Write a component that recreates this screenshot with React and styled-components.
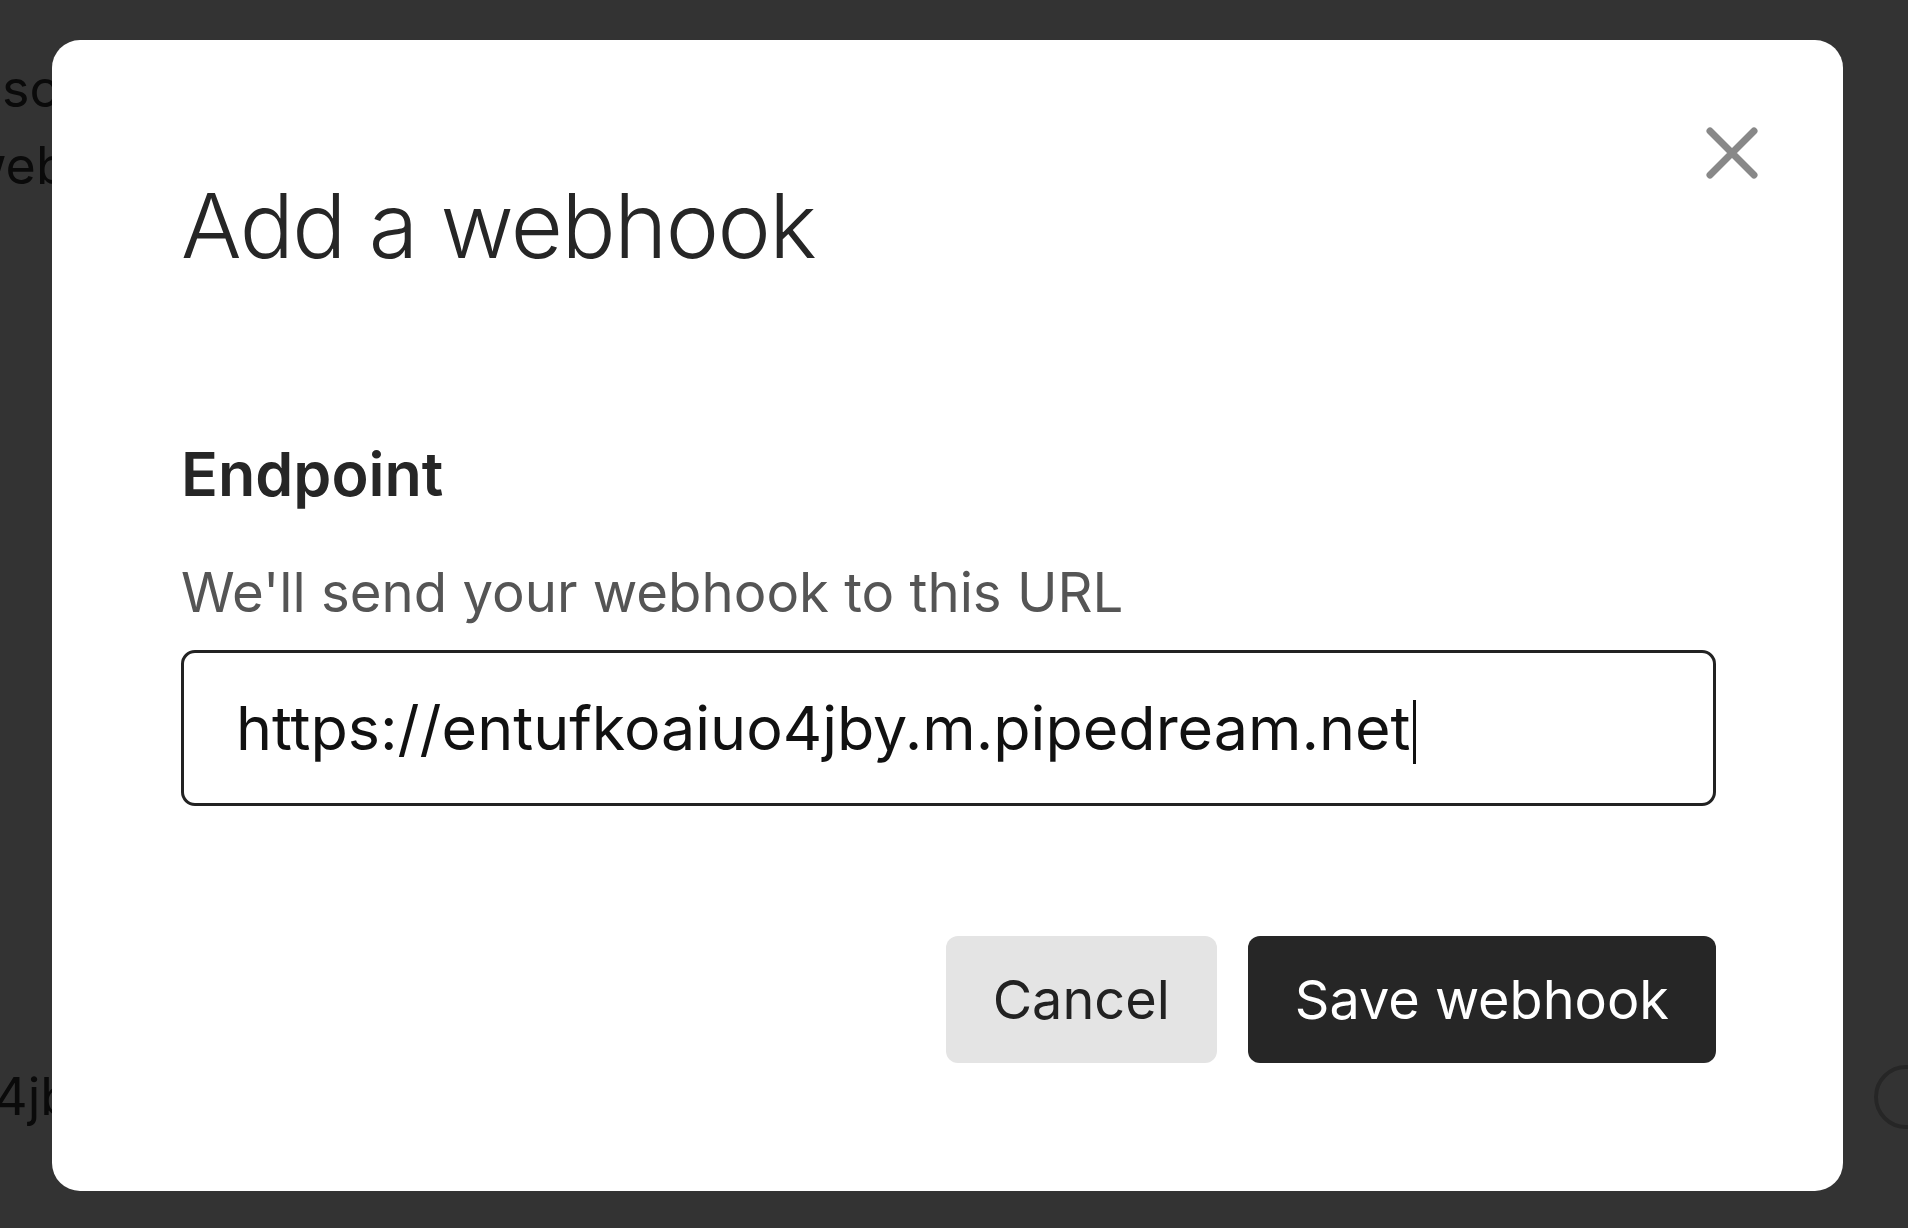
import React from 'react'
import styled, { createGlobalStyle } from 'styled-components'

const GlobalStyle = createGlobalStyle`
    html, body {
        margin: 0;
        padding: 0;
        height: 100%;
        overflow: hidden;
        background: #ffffff;
        font-family: Inter, "Noto Sans", sans-serif;
    }
`

const Page = styled.div`
    width: 1908px;
    height: 1228px;
    padding-top: 50px;
    box-sizing: border-box;
    display: flex;
    flex-direction: column;
    overflow: hidden;
`

const PageLine = styled.div`
    font-size: 52px;
    line-height: 77px;
    color: #333;
    white-space: nowrap;
    margin-left: ${p => p.$indent || 0}px;
    margin-top: ${p => p.$gap || 0}px;
    display: flex;
    align-items: center;
    justify-content: space-between;
`

const Ring = styled.span`
    width: 56px;
    height: 56px;
    border: 4px solid #bdbdbd;
    border-radius: 50%;
    margin-right: -30px;
`

const Overlay = styled.div`
    position: fixed;
    inset: 0;
    background: rgba(0, 0, 0, 0.8);
    padding: 40px 0 0 52px;
`

const Modal = styled.div`
    position: relative;
    width: 1791px;
    box-sizing: border-box;
    background: #fff;
    border-radius: 28px;
    padding: 132px 127px 128px 129px;
    display: flex;
    flex-direction: column;
`

const CloseButton = styled.button`
    position: absolute;
    top: 87px;
    right: 85px;
    width: 52px;
    height: 52px;
    padding: 0;
    border: 0;
    background: none;
    cursor: pointer;
    display: flex;
`

const Title = styled.h1`
    margin: 0;
    font-size: 90px;
    line-height: 108px;
    font-weight: 300;
    letter-spacing: -1.5px;
    color: #262626;
`

const Label = styled.h2`
    margin: 158px 0 0;
    font-size: 61px;
    line-height: 72px;
    font-weight: 600;
    color: #262626;
`

const Hint = styled.p`
    margin: 49px 0 0;
    font-size: 54.5px;
    line-height: 66px;
    color: #555;
`

const Field = styled.div`
    margin-top: 25px;
    height: 156px;
    box-sizing: border-box;
    border: 3px solid #222;
    border-radius: 14px;
    padding: 0 52px;
    display: flex;
    align-items: center;
    font-size: 61px;
    line-height: 74px;
    color: #111;
    white-space: nowrap;
`

const Caret = styled.span`
    width: 3px;
    height: 64px;
    margin: 8px 0 0 2px;
    background: #111;
`

const Actions = styled.div`
    margin-top: 130px;
    display: flex;
    justify-content: flex-end;
    gap: 31px;
`

const Button = styled.button`
    height: 127px;
    padding: 0 47px;
    border: 0;
    border-radius: 12px;
    font-family: Inter, "Noto Sans", sans-serif;
    font-size: 54px;
    font-weight: 400;
    cursor: pointer;
    background: ${p => (p.$primary ? '#262626' : '#e4e4e4')};
    color: ${p => (p.$primary ? '#ffffff' : '#222222')};
`

const CloseIcon = () => (
    <svg width="52" height="52" viewBox="0 0 52 52" fill="none">
        <path
            d="M4 4 L48 48 M48 4 L4 48"
            stroke="#888"
            strokeWidth="7"
            strokeLinecap="round"
        />
    </svg>
)

const App = () => {
    return (
        <>
            <GlobalStyle />
            <Page>
                <PageLine $indent={2}>scheduled deliveries</PageLine>
                <PageLine $indent={-36}>webhooks</PageLine>
                <PageLine $indent={-472} $gap={854}>
                    <span>https://entufkoaiuo4jby.m.pipedream.net</span>
                    <Ring />
                </PageLine>
            </Page>
            <Overlay>
                <Modal role="dialog">
                    <CloseButton aria-label="Close">
                        <CloseIcon />
                    </CloseButton>
                    <Title>Add a webhook</Title>
                    <Label>Endpoint</Label>
                    <Hint>We'll send your webhook to this URL</Hint>
                    <Field>
                        https://entufkoaiuo4jby.m.pipedream.net
                        <Caret />
                    </Field>
                    <Actions>
                        <Button>Cancel</Button>
                        <Button $primary>Save webhook</Button>
                    </Actions>
                </Modal>
            </Overlay>
        </>
    )
}

export default App
